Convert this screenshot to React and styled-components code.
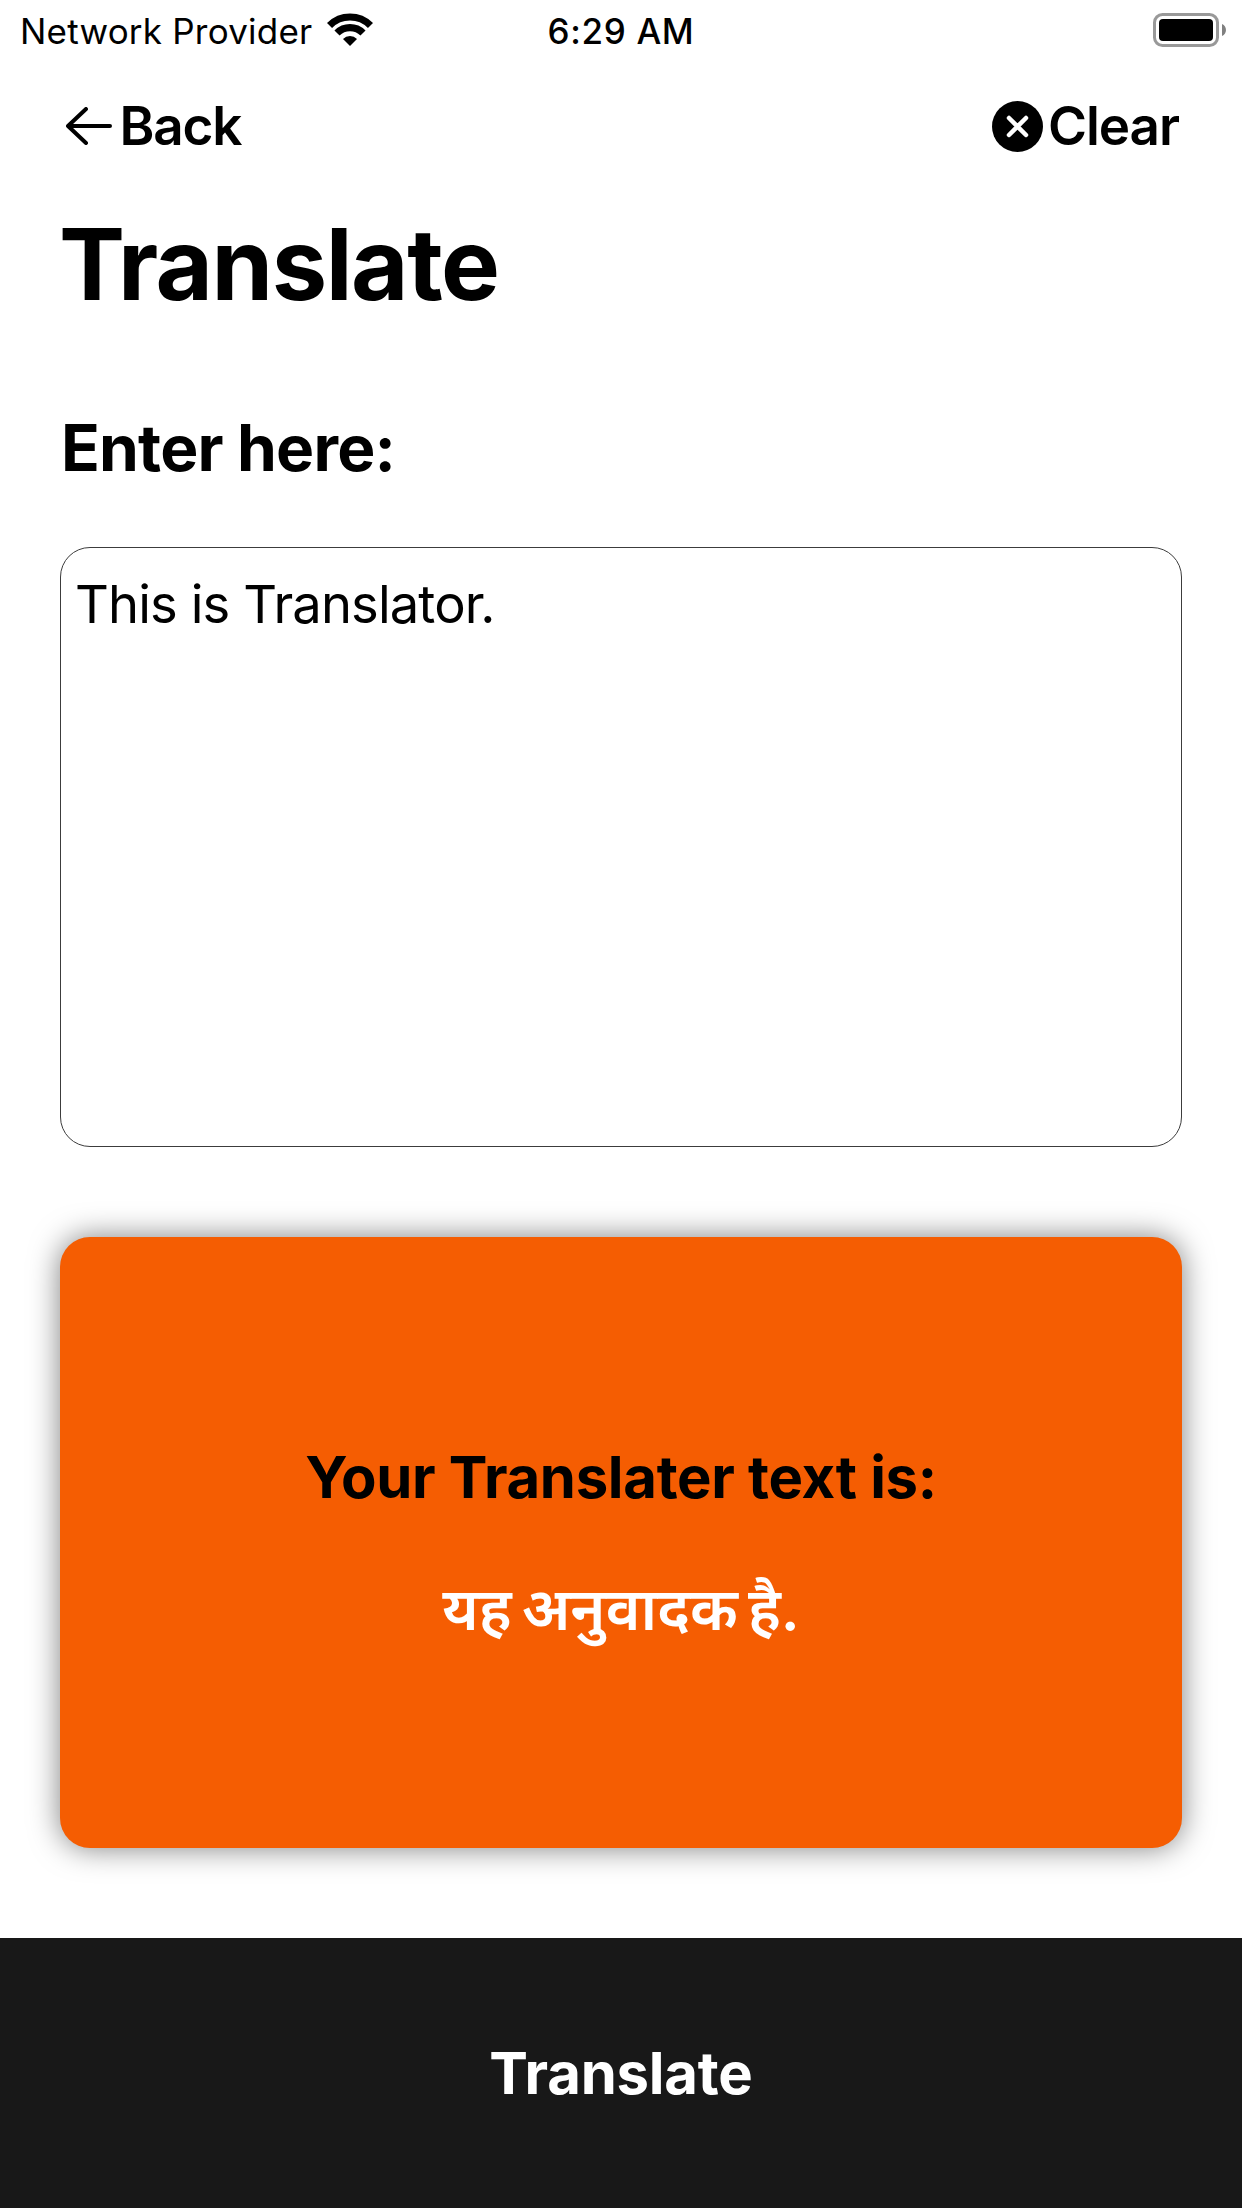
import React from 'react';
import styled, { createGlobalStyle } from 'styled-components';

const GlobalStyle = createGlobalStyle`
  * { box-sizing: border-box; }
  body {
    margin: 0;
    background: #fff;
    color: #000;
    font-family: Inter, "Noto Sans", sans-serif;
  }
`;

const Screen = styled.div`
  width: 1242px;
  height: 2208px;
  display: flex;
  flex-direction: column;
  overflow: hidden;
  background: #fff;
`;

const StatusBar = styled.header`
  height: 60px;
  flex: none;
  display: grid;
  grid-template-columns: 1fr auto 1fr;
  font-size: 35px;
  line-height: 62px;
`;

const Carrier = styled.div`
  display: flex;
  padding-left: 20px;
  gap: 14.5px;
  letter-spacing: 0.22px;
  white-space: nowrap;

  svg { margin-top: 13px; }
`;

const Time = styled.div`
  font-weight: 550;
  letter-spacing: 0.65px;
`;

const Power = styled.div`
  display: flex;
  justify-content: flex-end;
  padding: 13px 16px 0 0;
`;

const NavBar = styled.nav`
  height: 132px;
  flex: none;
  display: flex;
  align-items: center;
  justify-content: space-between;
  padding: 0 63px 0 66px;
`;

const NavButton = styled.button`
  display: flex;
  align-items: center;
  gap: ${(p) => p.$gap}px;
  padding: 0;
  border: 0;
  background: none;
  color: inherit;
  font: 600 53px/62px Inter, sans-serif;
  letter-spacing: ${(p) => p.$tracking}px;
`;

const Content = styled.main`
  flex: 1;
  display: flex;
  flex-direction: column;
  padding: 0 60px;
`;

const Title = styled.h1`
  margin: 0 0 64px -1px;
  font-size: 99px;
  line-height: 144px;
  font-weight: 700;
  letter-spacing: -1.45px;
`;

const Label = styled.h2`
  margin: 0 0 51px;
  padding-left: 1px;
  font-size: 64px;
  line-height: 96px;
  font-weight: 700;
  letter-spacing: -0.8px;
`;

const InputBox = styled.div`
  height: 600px;
  padding: 25px 14px;
  border: 1px solid #3c3c3c;
  border-radius: 30px;
  font-size: 52.500px;
  line-height: 63px;
  letter-spacing: -0.87px;
`;

const ResultCard = styled.section`
  height: 611px;
  margin-top: 90px;
  padding-top: 5px;
  display: flex;
  flex-direction: column;
  align-items: center;
  justify-content: center;
  gap: 56px;
  border-radius: 30px;
  background: #f55d02;
  box-shadow: 0 0 30px rgba(0, 0, 0, 0.5);
`;

const ResultHeading = styled.h3`
  margin: 0;
  font-size: 58px;
  line-height: 70px;
  font-weight: 700;
  letter-spacing: -0.29px;
`;

const ResultText = styled.p`
  margin: 0;
  color: #fff;
  font-size: 59.500px;
  line-height: 80px;
  font-weight: 600;
  word-spacing: -5px;
`;

const Footer = styled.footer`
  height: 270px;
  flex: none;
  display: flex;
  background: #181818;
`;

const SubmitButton = styled.button`
  flex: 1;
  padding: 0;
  border: 0;
  background: none;
  color: #fff;
  font: 700 58px/70px Inter, sans-serif;
  letter-spacing: -0.2px;
`;

const WifiIcon = () => (
  <svg width="46" height="34" viewBox="0 0 46 34" fill="none" stroke="#000" strokeWidth="7.2">
    <path d="M2.500 12.500a29 29 0 0 1 41 0" />
    <path d="M10 20a18.400 18.400 0 0 1 26 0" />
    <path d="M23 33l-7-7a9.900 9.900 0 0 1 14 0z" fill="#000" stroke="none" />
  </svg>
);

const BatteryIcon = () => (
  <svg width="73" height="34" viewBox="0 0 73 34">
    <rect x="1.500" y="1.500" width="63" height="31" rx="8" fill="none" stroke="#999" strokeWidth="3" />
    <rect x="6" y="6" width="54" height="22" rx="4" />
    <path d="M69 11c5.300 2 5.300 10 0 12z" fill="#808080" />
  </svg>
);

const ArrowIcon = () => (
  <svg width="46" height="38" viewBox="0 0 46 38" fill="none" stroke="#000" strokeWidth="4" strokeLinecap="round" strokeLinejoin="round">
    <path d="M20 2L2 19l18 17M2 19h42" />
  </svg>
);

const ClearIcon = () => (
  <svg width="51" height="51" viewBox="0 0 51 51">
    <circle cx="25.500" cy="25.500" r="25.500" />
    <path d="M17 17l17 17M34 17L17 34" stroke="#fff" strokeWidth="4.500" strokeLinecap="round" />
  </svg>
);

export default function App() {
  return (
    <Screen>
      <GlobalStyle />
      <StatusBar>
        <Carrier>
          <span>Network Provider</span>
          <WifiIcon />
        </Carrier>
        <Time>6:29 AM</Time>
        <Power>
          <BatteryIcon />
        </Power>
      </StatusBar>
      <NavBar>
        <NavButton $gap={7.5} $tracking={-1.2}>
          <ArrowIcon />
          Back
        </NavButton>
        <NavButton $gap={4.5} $tracking={-1.05}>
          <ClearIcon />
          Clear
        </NavButton>
      </NavBar>
      <Content>
        <Title>Translate</Title>
        <Label>Enter here:</Label>
        <InputBox>This is Translator.</InputBox>
        <ResultCard>
          <ResultHeading>Your Translater text is:</ResultHeading>
          <ResultText lang="hi">यह अनुवादक है.</ResultText>
        </ResultCard>
      </Content>
      <Footer>
        <SubmitButton>Translate</SubmitButton>
      </Footer>
    </Screen>
  );
}
